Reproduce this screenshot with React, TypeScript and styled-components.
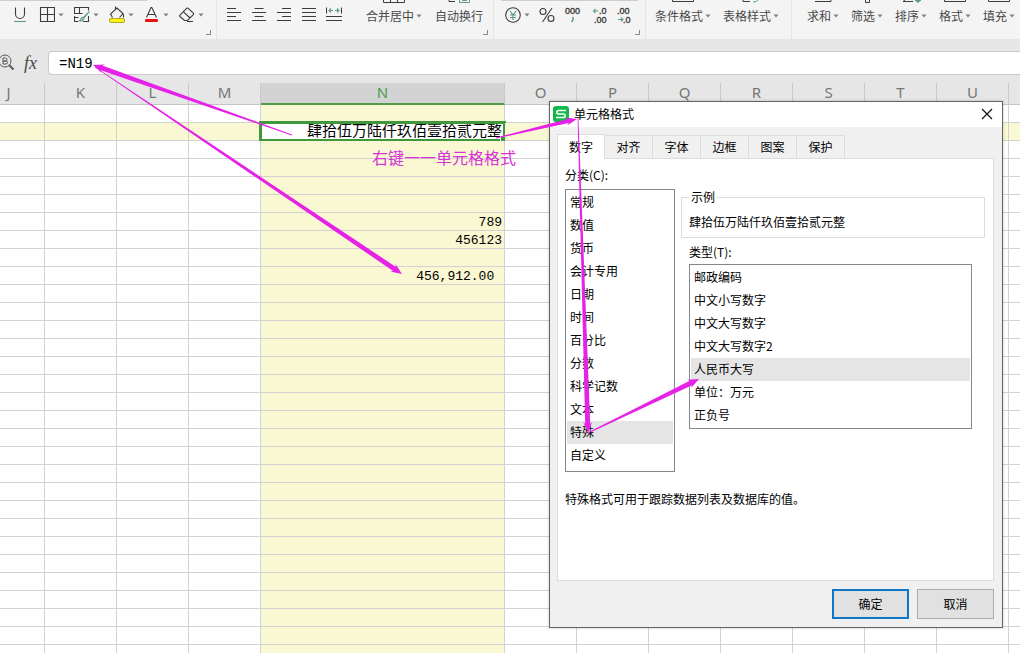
import React, { useState } from "react";
import styled, { createGlobalStyle, css } from "styled-components";

const uiFont = `"Noto Sans", "Noto Sans CJK SC", sans-serif`;
const dialogFont = `"Noto Sans CJK SC", sans-serif`;
const sheetFont = `"Liberation Mono", "Noto Sans CJK SC", monospace`;

const GlobalStyle = createGlobalStyle`
  * { box-sizing: border-box; }
  body { margin: 0; background: #e6e6e6; font-family: ${uiFont}; overflow: hidden; }
  button { border: 0; padding: 0; background: none; font: inherit; color: inherit; cursor: default; }
`;

const Page = styled.div`
  position: relative;
  display: flex;
  flex-direction: column;
  height: 100vh;
  overflow: hidden;
`;

/* ---------- ribbon ---------- */

const Ribbon = styled.header`
  display: flex;
  flex: none;
  height: 39px;
  overflow: hidden;
  background: #f4f4f4;
  box-shadow: 0 1px 0 #d8d8d8;
  font-family: ${dialogFont};
  font-size: 12px;
  color: #4a4a4a;
`;

/* $edge paints the bottom border of the drop-down boxes in the row above. */
const RibbonGroup = styled.div<{ $width?: number; $indent: number; $edge?: string }>`
  display: flex;
  flex: none;
  width: ${(p) => (p.$width ? `${p.$width}px` : "auto")};
  padding: 0 5px 4px ${(p) => p.$indent}px;
  ${(p) =>
    p.$width &&
    css`
      border-right: 1px solid #e4e4e4;
    `}
  ${(p) =>
    p.$edge &&
    css`
      background: linear-gradient(#cdcdcd, #cdcdcd) ${p.$edge} no-repeat;
    `}
`;

const Cluster = styled.div<{ $gap: number }>`
  display: flex;
  flex: none;
  gap: ${(p) => p.$gap}px;
`;

const IconButton = styled.button`
  display: flex;
  align-items: center;
  gap: 3px;
  height: 30px;
`;

const TallButton = styled.button`
  display: flex;
  flex-direction: column;
  align-items: center;
  height: 30px;
`;

const TallLabel = styled.span`
  display: flex;
  align-items: center;
  gap: 2px;
  line-height: 24px;
  white-space: nowrap;
`;

const Launcher = styled.button`
  flex: none;
  align-self: flex-end;
  margin-left: auto;
  width: 5px;
  height: 5px;
  border-right: 1px solid #8a8a8a;
  border-bottom: 1px solid #8a8a8a;
`;

const Caret = () => (
  <svg width="6" height="4" viewBox="0 0 6 4" aria-hidden="true">
    <path d="M.5 .5h5L3 3.500z" fill="#808080" />
  </svg>
);

type Glyph = React.ReactNode;

const Icon = ({ children, width = 16 }: { children: Glyph; width?: number }) => (
  <svg width={width} height="18" viewBox={`0 0 ${width} 18`} fill="none" stroke="#3c3c3c" strokeWidth="1.1" aria-hidden="true">
    {children}
  </svg>
);

const underlineGlyph = (
  <>
    <path d="M4.500 1.500V8a4.500 4.500 0 0 0 9 0V1.500" />
    <path d="M3 15.500h12" stroke="#5f9c86" />
  </>
);
const borderGlyph = <path d="M1.500 1.500h14v14h-14zM8.500 1.500v14M1.500 8.500h14" />;
const tableGlyph = (
  <>
    <path d="M14.500 4.500V1.500H.5v6h8M5.500 1.500v6M.5 10v5.500h4M.5 11.500h4M9 15.500h5.500V10" />
    <path d="M15.500 5.500l-6 6c-1.500-.5-2.500.5-2.500 1.500 0 1-1 1.500-2 1.500 2.500 1 5 0 5-2.500z" stroke="#5f9c86" fill="#a9cfc0" />
  </>
);
const bucketGlyph = (
  <>
    <path d="M3.500 11.500L1.500 8 8 2l6 5.500-3.500 4M6.500 .5v3M13.500 7.500c1.300 1.200 1.500 2.500 1 4" />
    <rect x=".5" y="12.500" width="15" height="4" rx="1.500" fill="#fdf417" stroke="#b5a92c" />
  </>
);
const fontColorGlyph = (
  <>
    <path d="M2.500 11.500L7 1.500h.8l4.700 10M4 8.500h7" />
    <rect x="1" y="13" width="13" height="3" rx="1" fill="#e81212" stroke="none" />
  </>
);
const eraserGlyph = (
  <path d="M9 2.200l5.300 5a1 1 0 0 1 0 1.400L8.500 14.500H5.500L1 10.500a1 1 0 0 1 0-1.400l6.800-6.900a1 1 0 0 1 1.200 0zM4.500 5.800L11 12M8 15.500h6" />
);

const alignGlyphs: { name: string; glyph: Glyph }[] = [
  { name: "左对齐", glyph: <path d="M1 2.500h9M1 6.500h14M1 10.500h9M1 14.500h14" /> },
  { name: "水平居中", glyph: <path d="M3.500 2.500h9M1 6.500h14M3.500 10.500h9M1 14.500h14" /> },
  { name: "右对齐", glyph: <path d="M6 2.500h9M1 6.500h14M6 10.500h9M1 14.500h14" /> },
  { name: "两端对齐", glyph: <path d="M1 2.500h14M1 6.500h14M1 10.500h14M1 14.500h14" /> },
  {
    name: "分散对齐",
    glyph: (
      <>
        <path d="M.5 1.500v6M15.500 1.500v6M0 10.500h16M0 14.500h16" />
        <path d="M3 4.500h4M5 2.500l-2 2 2 2M9 4.500h4M11 2.500l2 2-2 2" stroke="#5f9c86" />
      </>
    ),
  },
];

const DigitText = styled.text`
  font: 9px "Liberation Sans", sans-serif;
  fill: #333;
  stroke: #333;
  stroke-width: 0.3px;
`;

const yenGlyph = (
  <>
    <circle cx="8" cy="9" r="7.3" />
    <path d="M5 5l3 4 3-4M8 9v5M5 9h6M5 11.500h6" stroke="#5f9c86" strokeWidth="1.200" />
  </>
);
const percentGlyph = (
  <>
    <circle cx="4" cy="5.500" r="3" />
    <circle cx="12" cy="12.500" r="3" />
    <path d="M13 2L3.500 16" />
  </>
);
const thousandsGlyph = (
  <>
    <DigitText x="1" y="8">000</DigitText>
    <path d="M9 11v3l-1.500 2" stroke="#5f9c86" strokeWidth="1.500" />
  </>
);
const moreDecimalsGlyph = (
  <>
    <DigitText x="8" y="8">.0</DigitText>
    <DigitText x="3" y="17">.00</DigitText>
    <path d="M7.500 5h-5M4.500 3l-2 2 2 2" stroke="#5f9c86" />
  </>
);
const fewerDecimalsGlyph = (
  <>
    <DigitText x="1" y="8">.00</DigitText>
    <DigitText x="7" y="17">.0</DigitText>
    <path d="M2 13.500h5M5 11.500l2 2-2 2" stroke="#5f9c86" />
  </>
);

const mergeStub = <path d="M.5 0v2.500h21V0M7.500 0v2M14.500 0v2" />;
const wrapStub = (
  <>
    <path d="M1 0v1.500h6" />
    <path d="M11.500 0v2.500h10V0M14 .5h5" stroke="#5f9c86" />
  </>
);
const boxStub = <path d="M.5 0v1.500h21V0" />;
const brushStub = (
  <>
    <path d="M3 0v1.500h7" />
    <path d="M13 2c3 0 4-1 5-2" stroke="#5f9c86" />
  </>
);
const smallBoxStub = <path d="M3 1.500h16V0" />;
const stemStub = <path d="M9.500 0v2.500h4V0" />;
const sortStub = (
  <>
    <path d="M5 0L3 1.500h10" />
    <path d="M15 0l3 2.500L21 0z" stroke="#5f9c86" fill="#5f9c86" />
  </>
);

const Stub = ({ children }: { children: Glyph }) => (
  <svg width="22" height="4" viewBox="0 0 22 4" fill="none" stroke="#3c3c3c" aria-hidden="true">
    {children}
  </svg>
);

const TallTool = ({ label, glyph, caret = true }: { label: string; glyph: Glyph; caret?: boolean }) => (
  <TallButton>
    <Stub>{glyph}</Stub>
    <TallLabel>
      {label}
      {caret && <Caret />}
    </TallLabel>
  </TallButton>
);

const formatTools = [
  { name: "边框", glyph: borderGlyph },
  { name: "表格样式", glyph: tableGlyph },
  { name: "填充颜色", glyph: bucketGlyph },
  { name: "字体颜色", glyph: fontColorGlyph },
  { name: "清除", glyph: eraserGlyph },
];

const editTools = [
  { label: "求和", glyph: smallBoxStub },
  { label: "筛选", glyph: stemStub },
  { label: "排序", glyph: sortStub },
  { label: "格式", glyph: boxStub },
  { label: "填充", glyph: boxStub },
];

/* ---------- formula bar ---------- */

const FormulaRow = styled.div`
  display: flex;
  flex: none;
  align-items: center;
  padding: 12px 0 8px;
  background: #e6e6e6;
`;

const FormulaTools = styled.div`
  display: flex;
  align-items: center;
  gap: 8px;
  width: 48px;
`;

const FindButton = styled.button`
  display: flex;
`;

const FxButton = styled.button`
  font: italic 18px/22px "Liberation Serif", serif;
  color: #4a4a4a;
`;

const FormulaInput = styled.input`
  flex: 1;
  min-width: 0;
  height: 24px;
  padding: 2px 10px 0;
  border: 1px solid #cacaca;
  border-right: 0;
  border-radius: 4px 0 0 4px;
  background: #fff;
  font: 14px ${sheetFont};
  color: #000;
  outline: none;
`;

/* ---------- sheet ---------- */

const SheetArea = styled.main`
  flex: 1;
  min-height: 0;
  overflow: hidden;
  background: #fff;
`;

/* The view is scrolled a little way into column J. */
const Sheet = styled.table`
  width: 1108px;
  margin-left: -27px;
  table-layout: fixed;
  border-collapse: separate;
  border-spacing: 0;
`;

const ColumnHead = styled.th<{ $active: boolean }>`
  height: 22px;
  padding: 1px 0 0;
  border-right: 1px solid #c9c9c9;
  border-bottom: ${(p) => (p.$active ? "2px solid #4f9d4b" : "1px solid #c4c4c4")};
  background: ${(p) => (p.$active ? "#d3d3d3" : "#e6e6e6")};
  color: ${(p) => (p.$active ? "#4f9d4b" : "#777")};
  font: 15px/16px ${uiFont};
  vertical-align: top;
`;

const Cell = styled.td<{ $tinted: boolean; $picked?: boolean }>`
  position: relative;
  height: 18px;
  padding: 3px 2px 0 0;
  border-right: 1px solid #d2d2d2;
  border-bottom: 1px solid #d2d2d2;
  background: ${(p) => (p.$tinted && !p.$picked ? "#faf8d2" : "#fff")};
  font: 13px/14px ${sheetFont};
  text-align: right;
  white-space: pre;
  color: #000;
`;

const Amount = styled.span`
  display: block;
  font-size: 15px;
`;

const SelectionFrame = styled.div`
  position: absolute;
  inset: -2px;
  border: 3px solid #3f993c;
  pointer-events: none;

  &::after {
    content: "";
    position: absolute;
    right: -4px;
    bottom: -4px;
    width: 6px;
    height: 6px;
    border: 1px solid #fff;
    border-width: 1px 0 0 1px;
    background: #3f993c;
  }
`;

const columns = ["J", "K", "L", "M", "N", "O", "P", "Q", "R", "S", "T", "U", ""];
const amountText = "肆拾伍万陆仟玖佰壹拾贰元整";
const values: Record<number, string> = { 6: "789", 7: "456123", 9: "456,912.00 " };
const rows = Array.from({ length: 31 }, (_, i) => i);
const pickedRow = 1;

const SheetView = () => (
  <SheetArea>
    <Sheet>
      <colgroup>
        {columns.map((c) => (
          <col key={c} width={c === "N" ? 244 : 72} />
        ))}
      </colgroup>
      <thead>
        <tr>
          {columns.map((c) => (
            <ColumnHead key={c} scope="col" $active={c === "N"}>
              {c}
            </ColumnHead>
          ))}
        </tr>
      </thead>
      <tbody>
        {rows.map((r) => (
          <tr key={r}>
            {columns.map((c) => {
              const picked = c === "N" && r === pickedRow;
              return (
                <Cell key={c} $tinted={c === "N" || r === pickedRow} $picked={picked}>
                  {picked && <Amount>{amountText}</Amount>}
                  {picked && <SelectionFrame />}
                  {c === "N" && values[r]}
                </Cell>
              );
            })}
          </tr>
        ))}
      </tbody>
    </Sheet>
  </SheetArea>
);

/* ---------- dialog ---------- */

const DialogWindow = styled.section`
  position: absolute;
  top: 101px;
  right: 17px;
  width: 454px;
  border: 1px solid #646464;
  background: #f0f0f0;
  box-shadow: 0 0 3px rgba(0, 0, 0, 0.2);
  font: 12px/18px ${dialogFont};
  color: #000;
`;

const TitleBar = styled.div`
  display: flex;
  align-items: center;
  gap: 5px;
  height: 25px;
  padding: 0 9px 2px 3px;
  background: #fff;
`;

const Title = styled.h1`
  flex: 1;
  margin: 0;
  font: inherit;
`;

const CloseButton = styled.button`
  display: flex;
`;

const DialogBody = styled.div`
  padding: 7px 8px 8px 7px;
`;

const TabList = styled.div`
  display: flex;
  align-items: flex-end;
`;

const Tab = styled.button<{ $active: boolean }>`
  width: 48px;
  height: ${(p) => (p.$active ? 25 : 23)}px;
  border: 1px solid #dcdcdc;
  border-bottom: 0;
  border-left-width: ${(p) => (p.$active ? 1 : 0)}px;
  background: ${(p) => (p.$active ? "#fff" : "#f0f0f0")};
  ${(p) =>
    p.$active &&
    css`
      position: relative;
      margin-bottom: -1px;
    `}
`;

const TabPanel = styled.div`
  min-height: 423px;
  padding: 7px 8px 7px 7px;
  border: 1px solid #dcdcdc;
  background: #fff;
`;

const PanelColumns = styled.div`
  display: grid;
  grid-template-columns: 110px 1fr;
  gap: 6px;
`;

const FieldLabel = styled.label`
  display: block;
`;

const ListBox = styled.select`
  display: block;
  width: 100%;
  padding: 1px;
  border: 1px solid #828790;
  border-radius: 0;
  background: #fff;
  font: inherit;
  color: #000;
  outline: none;
  overflow: hidden;
  scrollbar-width: none;

  option {
    height: 23px;
    min-height: 23px;
    padding: 2px 3px 3px;
    line-height: 18px;
    color: #000;
  }
  option:checked {
    background: #e5e5e5 linear-gradient(#e5e5e5, #e5e5e5);
    color: #000;
  }
`;

const CategoryList = styled(ListBox)`
  height: 283px;
  margin-top: 5px;
`;

const TypeList = styled(ListBox)`
  height: 165px;
  margin-top: 3px;
`;

const DetailColumn = styled.div`
  padding-top: 22px;
`;

const Sample = styled.fieldset`
  min-width: 0;
  margin: 0;
  padding: 7px 7px 6px;
  border: 1px solid #dcdcdc;

  legend {
    padding: 0 2px;
  }
`;

const TypeField = styled.div`
  padding: 5px 13px 0 8px;
`;

const Note = styled.p`
  margin: 18px 0 0;
`;

const DialogActions = styled.div`
  display: flex;
  justify-content: flex-end;
  gap: 8px;
  padding-top: 8px;
`;

const ActionButton = styled.button<{ $primary?: boolean }>`
  width: 77px;
  height: 30px;
  border: ${(p) => (p.$primary ? "2px solid #0f76c6" : "1px solid #adadad")};
  background: #e1e1e1;
`;

const tabs = ["数字", "对齐", "字体", "边框", "图案", "保护"];
const categories = ["常规", "数值", "货币", "会计专用", "日期", "时间", "百分比", "分数", "科学记数", "文本", "特殊", "自定义"];
const types = ["邮政编码", "中文小写数字", "中文大写数字", "中文大写数字2", "人民币大写", "单位：万元", "正负号"];

const FormatDialog = () => {
  const [tab, setTab] = useState(tabs[0]);
  const [category, setCategory] = useState("特殊");
  const [type, setType] = useState("人民币大写");
  return (
    <DialogWindow role="dialog" aria-labelledby="format-title">
      <TitleBar>
        <svg width="16" height="16" viewBox="0 0 16 16" aria-hidden="true">
          <rect width="16" height="16" rx="3" fill="#12b84a" />
          <path d="M13 4.500H5.500a1.700 1.700 0 0 0 0 3.500h5a1.700 1.700 0 0 1 0 3.500H3" fill="none" stroke="#fff" strokeWidth="1.500" />
        </svg>
        <Title id="format-title">单元格格式</Title>
        <CloseButton aria-label="关闭">
          <svg width="12" height="12" viewBox="0 0 12 12" fill="none" stroke="#111" strokeWidth="1.200" aria-hidden="true">
            <path d="M1 1l10 10M11 1L1 11" />
          </svg>
        </CloseButton>
      </TitleBar>
      <DialogBody>
        <TabList role="tablist">
          {tabs.map((t) => (
            <Tab key={t} role="tab" aria-selected={t === tab} $active={t === tab} onClick={() => setTab(t)}>
              {t}
            </Tab>
          ))}
        </TabList>
        <TabPanel role="tabpanel">
          <PanelColumns>
            <div>
              <FieldLabel htmlFor="category">分类(C):</FieldLabel>
              <CategoryList id="category" size={12} value={category} onChange={(e) => setCategory(e.target.value)}>
                {categories.map((c) => (
                  <option key={c}>{c}</option>
                ))}
              </CategoryList>
            </div>
            <DetailColumn>
              <Sample>
                <legend>示例</legend>
                {amountText}
              </Sample>
              <TypeField>
                <FieldLabel htmlFor="type">类型(T):</FieldLabel>
                <TypeList id="type" size={7} value={type} onChange={(e) => setType(e.target.value)}>
                  {types.map((t) => (
                    <option key={t}>{t}</option>
                  ))}
                </TypeList>
              </TypeField>
            </DetailColumn>
          </PanelColumns>
          <Note>特殊格式可用于跟踪数据列表及数据库的值。</Note>
        </TabPanel>
        <DialogActions>
          <ActionButton $primary>确定</ActionButton>
          <ActionButton>取消</ActionButton>
        </DialogActions>
      </DialogBody>
    </DialogWindow>
  );
};

/* ---------- annotations ---------- */

const AnnotationLayer = styled.svg`
  position: absolute;
  top: 0;
  left: 0;
  pointer-events: none;
  fill: #e622e6;
`;

const NoteText = styled.text`
  font: 16px ${dialogFont};
  fill: #d633d6;
`;

type Point = [number, number];

/* A shaft that widens from a point at the tail to a solid head. */
const Arrow = ({ from, to, shaft = 5 }: { from: Point; to: Point; shaft?: number }) => {
  const dx = to[0] - from[0];
  const dy = to[1] - from[1];
  const len = Math.hypot(dx, dy);
  const ux = dx / len;
  const uy = dy / len;
  const at = (back: number, side: number) =>
    `${(to[0] - ux * back - uy * side).toFixed(1)},${(to[1] - uy * back + ux * side).toFixed(1)}`;
  const half = shaft / 2;
  return (
    <polygon
      points={[at(len, 0.4), at(9, half), at(11, half + 2), at(0, 0), at(11, -half - 2), at(9, -half), at(len, -0.4)].join(" ")}
    />
  );
};

const Annotations = () => (
  <AnnotationLayer width="1020" height="653" viewBox="0 0 1020 653">
    <Arrow from={[292, 135]} to={[93, 65]} />
    <Arrow from={[95, 67]} to={[402, 274]} />
    <Arrow from={[496, 138]} to={[577, 119]} shaft={4} />
    <Arrow from={[578, 118]} to={[588, 433]} />
    <Arrow from={[588, 433]} to={[699, 379]} />
    <NoteText x="372" y="164">右键一一单元格格式</NoteText>
  </AnnotationLayer>
);

export default function App() {
  const [formula, setFormula] = useState("=N19");
  return (
    <>
      <GlobalStyle />
      <Page>
        <Ribbon>
          <RibbonGroup $width={217} $indent={11} $edge="0 0 / 147px 1px">
            <Cluster $gap={10}>
              <IconButton aria-label="下划线">
                <Icon width={18}>{underlineGlyph}</Icon>
              </IconButton>
              {formatTools.map((t) => (
                <IconButton key={t.name} aria-label={t.name}>
                  <Icon>{t.glyph}</Icon>
                  <Caret />
                </IconButton>
              ))}
            </Cluster>
            <Launcher aria-label="字体设置" />
          </RibbonGroup>
          <RibbonGroup $width={277} $indent={9}>
            <Cluster $gap={24}>
              <Cluster $gap={9}>
                {alignGlyphs.map((a) => (
                  <IconButton key={a.name} aria-label={a.name}>
                    <Icon>{a.glyph}</Icon>
                  </IconButton>
                ))}
              </Cluster>
              <Cluster $gap={13}>
                <TallTool label="合并居中" glyph={mergeStub} />
                <TallTool label="自动换行" glyph={wrapStub} caret={false} />
              </Cluster>
            </Cluster>
            <Launcher aria-label="对齐设置" />
          </RibbonGroup>
          <RibbonGroup $width={152} $indent={11} $edge="7px 0 / 137px 1px">
            <Cluster $gap={9}>
              <IconButton aria-label="货币">
                <Icon>{yenGlyph}</Icon>
                <Caret />
              </IconButton>
              <IconButton aria-label="百分比">
                <Icon>{percentGlyph}</Icon>
              </IconButton>
              <IconButton aria-label="千位分隔">
                <Icon width={18}>{thousandsGlyph}</Icon>
              </IconButton>
              <IconButton aria-label="增加小数位">
                <Icon>{moreDecimalsGlyph}</Icon>
              </IconButton>
              <IconButton aria-label="减少小数位">
                <Icon>{fewerDecimalsGlyph}</Icon>
              </IconButton>
            </Cluster>
            <Launcher aria-label="数字设置" />
          </RibbonGroup>
          <RibbonGroup $width={146} $indent={9}>
            <Cluster $gap={12}>
              <TallTool label="条件格式" glyph={boxStub} />
              <TallTool label="表格样式" glyph={brushStub} />
            </Cluster>
          </RibbonGroup>
          <RibbonGroup $indent={15}>
            <Cluster $gap={12}>
              {editTools.map((t) => (
                <TallTool key={t.label} label={t.label} glyph={t.glyph} />
              ))}
            </Cluster>
          </RibbonGroup>
        </Ribbon>
        <FormulaRow>
          <FormulaTools>
            <FindButton aria-label="查找">
              <svg width="16" height="18" viewBox="0 0 16 18" fill="none" stroke="#5a5a5a" aria-hidden="true">
                <circle cx="5" cy="7" r="6" />
                <path d="M3 10V4h2.500a1.500 1.500 0 0 1 0 3H3h3a1.500 1.500 0 0 1 0 3z" />
                <path d="M9 11l4.500 4.500" strokeWidth="2" />
              </svg>
            </FindButton>
            <FxButton aria-label="插入函数">fx</FxButton>
          </FormulaTools>
          <FormulaInput aria-label="编辑栏" value={formula} onChange={(e) => setFormula(e.target.value)} />
        </FormulaRow>
        <SheetView />
        <FormatDialog />
        <Annotations />
      </Page>
    </>
  );
}
